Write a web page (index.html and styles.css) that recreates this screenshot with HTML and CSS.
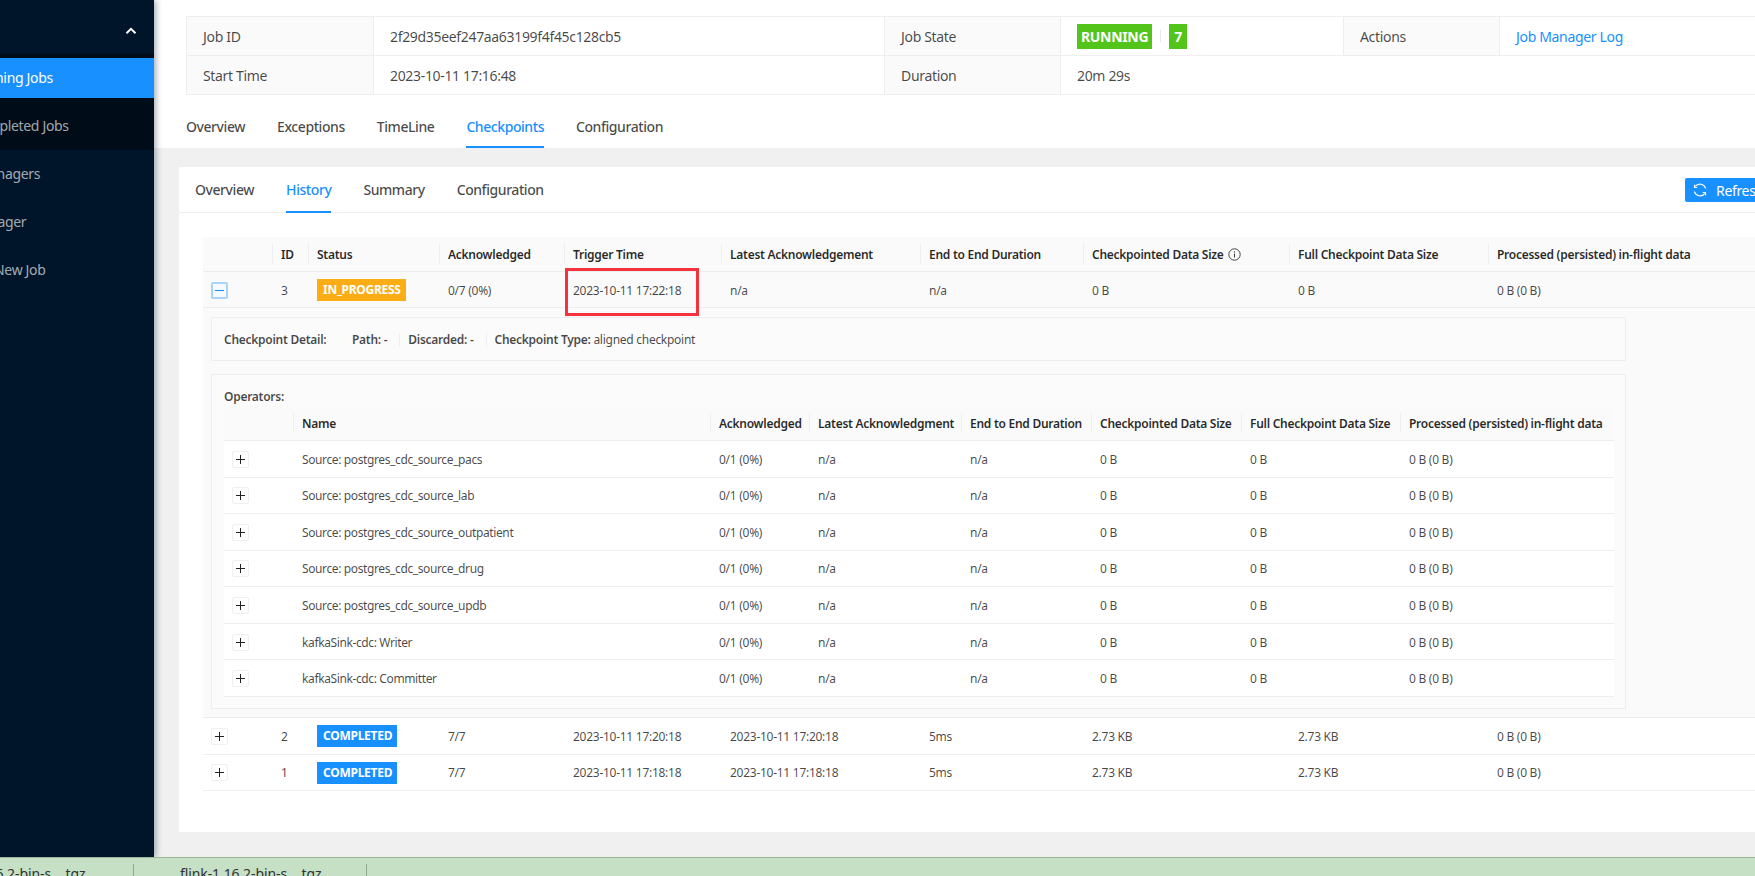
FILE: index.html
```html
<!DOCTYPE html>
<html lang="en">
<head>
<meta charset="utf-8">
<title>Flink Job - Checkpoints</title>
<link rel="stylesheet" href="styles.css">
</head>
<body>
<div class="app">
  <aside class="sidebar">
    <div class="nav-head">
      <svg class="chev" width="12" height="8" viewBox="0 0 12 8"><path d="M1.500 6.200 6 1.800l4.500 4.400" fill="none" stroke="#fff" stroke-width="2"/></svg>
    </div>
    <div class="nav-sub">
      <div class="nav-item active"><span class="label-sub">Running Jobs</span></div>
      <div class="nav-item last"><span class="label-sub">Completed Jobs</span></div>
    </div>
    <div class="nav-top">
      <div class="nav-item"><span class="label-top">Task Managers</span></div>
      <div class="nav-item"><span class="label-top">Job Manager</span></div>
      <div class="nav-item"><span class="label-top">Submit New Job</span></div>
    </div>
  </aside>
  <main class="main">
    <header class="job-head">
      <table class="desc">
        <colgroup><col class="d1"><col class="d2"><col class="d3"><col class="d4"><col class="d5"><col class="d6"></colgroup>
        <tr>
          <th>Job ID</th><td>2f29d35eef247aa63199f4f45c128cb5</td>
          <th>Job State</th>
          <td class="state"><span class="badge green">RUNNING</span><span class="vsep"></span><span class="badge green count">7</span></td>
          <th>Actions</th><td><span class="link">Job Manager Log</span></td>
        </tr>
        <tr>
          <th>Start Time</th><td>2023-10-11 17:16:48</td>
          <th>Duration</th><td colspan="3">20m 29s</td>
        </tr>
      </table>
      <nav class="tabs">
        <span class="tab">Overview</span>
        <span class="tab">Exceptions</span>
        <span class="tab">TimeLine</span>
        <span class="tab on">Checkpoints</span>
        <span class="tab">Configuration</span>
      </nav>
    </header>
    <section class="content">
      <div class="card">
        <div class="subnav">
          <div class="subtabs">
            <span class="tab">Overview</span>
            <span class="tab on">History</span>
            <span class="tab">Summary</span>
            <span class="tab">Configuration</span>
          </div>
          <button class="refresh" type="button">
            <svg width="14" height="14" viewBox="0 0 14 14"><path d="M12.600 5.300A5.900 5.900 0 0 0 2.300 3.400M1.400 8.700A5.900 5.900 0 0 0 11.700 10.600" fill="none" stroke="#fff" stroke-width="1.100"/><path d="M1.500 1.800v2.700h2.700M12.500 12.200V9.500H9.800" fill="none" stroke="#fff" stroke-width="1.100"/></svg>
            <span>Refresh</span>
          </button>
        </div>
        <table class="grid main-grid">
          <colgroup><col class="m1"><col class="m2"><col class="m3"><col class="m4"><col class="m5"><col class="m6"><col class="m7"><col class="m8"><col class="m9"><col class="m10"></colgroup>
          <thead>
            <tr>
              <th></th><th class="sep">ID</th><th class="sep">Status</th><th class="sep">Acknowledged</th><th class="sep">Trigger Time</th><th class="sep">Latest Acknowledgement</th><th class="sep">End to End Duration</th>
              <th class="sep">Checkpointed Data Size<svg class="info" width="13" height="13" viewBox="0 0 13 13"><circle cx="6.500" cy="6.500" r="5.700" fill="none" stroke="#444" stroke-width="1"/><path d="M6.500 5.500v4M6.500 3.300v1.200" stroke="#444" stroke-width="1.100"/></svg></th>
              <th class="sep">Full Checkpoint Data Size</th><th class="sep">Processed (persisted) in-flight data</th>
            </tr>
          </thead>
          <tbody>
            <tr class="shade head-row">
              <td><span class="exp open"><svg width="11" height="11" viewBox="0 0 11 11"><path d="M1 5.500h9" stroke="#1890ff" stroke-width="1.100"/></svg></span></td>
              <td class="num">3</td><td><span class="badge small orange">IN_PROGRESS</span></td><td>0/7 (0%)</td>
              <td class="mark-cell"><span class="mark"></span>2023-10-11 17:22:18</td>
              <td>n/a</td><td>n/a</td><td>0 B</td><td>0 B</td><td>0 B (0 B)</td>
            </tr>
            <tr class="shade">
              <td colspan="10" class="detail">
                <div class="box info-box">
                  <strong class="title">Checkpoint Detail:</strong>
                  <strong class="pair">Path: -</strong>
                  <strong class="pair bar">Discarded: -</strong>
                  <span class="pair bar"><strong>Checkpoint Type:</strong> aligned checkpoint</span>
                </div>
                <div class="box ops-box">
                  <strong class="ops-title">Operators:</strong>
                  <table class="grid op-grid">
                    <colgroup><col class="o1"><col class="o2"><col class="o3"><col class="o4"><col class="o5"><col class="o6"><col class="o7"><col class="o8"></colgroup>
                    <thead>
                      <tr><th></th><th class="sep">Name</th><th class="sep">Acknowledged</th><th class="sep">Latest Acknowledgment</th><th class="sep">End to End Duration</th><th class="sep">Checkpointed Data Size</th><th class="sep">Full Checkpoint Data Size</th><th class="sep">Processed (persisted) in-flight data</th></tr>
                    </thead>
                    <tbody>
                      <tr><td><span class="exp"><svg width="11" height="11" viewBox="0 0 11 11"><path d="M1 5.500h9M5.500 1v9" stroke="#222" stroke-width="1"/></svg></span></td><td class="name">Source: postgres_cdc_source_pacs</td><td>0/1 (0%)</td><td>n/a</td><td>n/a</td><td>0 B</td><td>0 B</td><td>0 B (0 B)</td></tr>
                      <tr><td><span class="exp"><svg width="11" height="11" viewBox="0 0 11 11"><path d="M1 5.500h9M5.500 1v9" stroke="#222" stroke-width="1"/></svg></span></td><td class="name">Source: postgres_cdc_source_lab</td><td>0/1 (0%)</td><td>n/a</td><td>n/a</td><td>0 B</td><td>0 B</td><td>0 B (0 B)</td></tr>
                      <tr><td><span class="exp"><svg width="11" height="11" viewBox="0 0 11 11"><path d="M1 5.500h9M5.500 1v9" stroke="#222" stroke-width="1"/></svg></span></td><td class="name">Source: postgres_cdc_source_outpatient</td><td>0/1 (0%)</td><td>n/a</td><td>n/a</td><td>0 B</td><td>0 B</td><td>0 B (0 B)</td></tr>
                      <tr><td><span class="exp"><svg width="11" height="11" viewBox="0 0 11 11"><path d="M1 5.500h9M5.500 1v9" stroke="#222" stroke-width="1"/></svg></span></td><td class="name">Source: postgres_cdc_source_drug</td><td>0/1 (0%)</td><td>n/a</td><td>n/a</td><td>0 B</td><td>0 B</td><td>0 B (0 B)</td></tr>
                      <tr><td><span class="exp"><svg width="11" height="11" viewBox="0 0 11 11"><path d="M1 5.500h9M5.500 1v9" stroke="#222" stroke-width="1"/></svg></span></td><td class="name">Source: postgres_cdc_source_updb</td><td>0/1 (0%)</td><td>n/a</td><td>n/a</td><td>0 B</td><td>0 B</td><td>0 B (0 B)</td></tr>
                      <tr><td><span class="exp"><svg width="11" height="11" viewBox="0 0 11 11"><path d="M1 5.500h9M5.500 1v9" stroke="#222" stroke-width="1"/></svg></span></td><td class="name">kafkaSink-cdc: Writer</td><td>0/1 (0%)</td><td>n/a</td><td>n/a</td><td>0 B</td><td>0 B</td><td>0 B (0 B)</td></tr>
                      <tr><td><span class="exp"><svg width="11" height="11" viewBox="0 0 11 11"><path d="M1 5.500h9M5.500 1v9" stroke="#222" stroke-width="1"/></svg></span></td><td class="name">kafkaSink-cdc: Committer</td><td>0/1 (0%)</td><td>n/a</td><td>n/a</td><td>0 B</td><td>0 B</td><td>0 B (0 B)</td></tr>
                    </tbody>
                  </table>
                </div>
              </td>
            </tr>
            <tr>
              <td><span class="exp"><svg width="11" height="11" viewBox="0 0 11 11"><path d="M1 5.500h9M5.500 1v9" stroke="#222" stroke-width="1"/></svg></span></td>
              <td class="num">2</td><td><span class="badge small blue">COMPLETED</span></td><td>7/7</td><td>2023-10-11 17:20:18</td><td>2023-10-11 17:20:18</td><td>5ms</td><td>2.73 KB</td><td>2.73 KB</td><td>0 B (0 B)</td>
            </tr>
            <tr>
              <td><span class="exp"><svg width="11" height="11" viewBox="0 0 11 11"><path d="M1 5.500h9M5.500 1v9" stroke="#222" stroke-width="1"/></svg></span></td>
              <td class="num">1</td><td><span class="badge small blue">COMPLETED</span></td><td>7/7</td><td>2023-10-11 17:18:18</td><td>2023-10-11 17:18:18</td><td>5ms</td><td>2.73 KB</td><td>2.73 KB</td><td>0 B (0 B)</td>
            </tr>
          </tbody>
        </table>
      </div>
    </section>
  </main>
</div>
<footer class="downloads">
  <div class="dl first"><span>flink-1.16.2-bin-s....tgz</span></div>
  <div class="dl second"><span>flink-1.16.2-bin-s....tgz</span></div>
</footer>
</body>
</html>
```

FILE: styles.css
```css
* { box-sizing: border-box; }
html, body { margin: 0; height: 100%; overflow: hidden; }
body {
  font-family: "Noto Sans", "Open Sans", sans-serif;
  font-size: 14px;
  letter-spacing: -.33px;
  color: rgba(0, 0, 0, .72);
  background: #fff;
  display: flex;
  flex-direction: column;
  width: 1755px;
  height: 876px;
}
table { border-spacing: 0; border-collapse: separate; table-layout: fixed; }

.app { display: flex; height: 857px; overflow: hidden; }

/* sidebar */
.sidebar {
  width: 154px;
  flex: none;
  background: #001529;
  color: rgba(255, 255, 255, .65);
  box-shadow: 2px 0 6px rgba(0, 21, 41, .35);
  position: relative;
  z-index: 2;
  overflow: hidden;
}
.nav-head { height: 54px; display: flex; justify-content: flex-end; padding: 27px 17px 0 0; }
.chev { display: block; }
.nav-sub { background: #000c17; padding-top: 4px; height: 96px; }
.nav-top { padding-top: 4px; }
.nav-item { height: 40px; line-height: 40px; margin-bottom: 8px; white-space: nowrap; overflow: hidden; }
.nav-item.last { margin-bottom: 0; }
.nav-item.active { background: #1890ff; color: #fff; }
.label-sub { margin-left: -30px; }
.label-top { margin-left: -54px; }

/* main */
.main { flex: 1; min-width: 0; background: #f0f0f0; overflow: hidden; display: flex; flex-direction: column; }
.job-head { background: #fff; padding: 16px 0 0 32px; height: 149px; border-bottom: 1px solid #eee; flex: none; }
.desc { width: 1569px; border: 1px solid #eee; border-width: 1px 0 0 1px; }
.desc th, .desc td { height: 39px; padding: 0 16px; border-right: 1px solid #eee; border-bottom: 1px solid #eee; font-weight: 400; text-align: left; white-space: nowrap; overflow: hidden; }
.desc th { background: #fafafa; }
.d1 { width: 187px; } .d2 { width: 511px; } .d3 { width: 176px; } .d4 { width: 283px; } .d5 { width: 156px; } .d6 { width: 256px; }
.badge { display: inline-block; color: #fff; font-weight: 700; white-space: nowrap; vertical-align: middle; }
.desc .badge { height: 25px; line-height: 25px; padding: 0 4px; }
.desc .badge.count { width: 18px; padding: 0; text-align: center; }
.green { background: #52c41a; }
.orange { background: #faad14; }
.blue { background: #1890ff; }
.vsep { display: inline-block; width: 1px; height: 12px; background: #e8e8e8; margin: 0 8px; vertical-align: middle; }
.link { color: #1890ff; }

.tabs { display: flex; gap: 32px; margin-top: 15px; height: 38px; }
.tab { display: block; height: 100%; line-height: 33px; white-space: nowrap; font-weight: 500; letter-spacing: -.43px; }
.tab.on { color: #1890ff; border-bottom: 2px solid #1890ff; }

.content { flex: 1; padding: 18px 0 0 25px; }
.card { background: #fff; height: 665px; width: 1600px; }
.subnav { height: 46px; border-bottom: 1px solid #eee; display: flex; justify-content: space-between; }
.subtabs { display: flex; gap: 32px; padding-left: 16px; height: 46px; padding-top: 9px; }
.subtabs .tab { line-height: 28px; height: 37px; }
.refresh {
  display: flex; align-items: center; gap: 9px;
  width: 100px; height: 24px; margin: 11px 0 0 0; padding: 0 8px;
  background: #1890ff; color: #fff; border: 0; border-radius: 2px;
  font: inherit; letter-spacing: inherit; position: relative; left: 6px;
}

/* grids */
.grid { font-size: 12px; letter-spacing: -.27px; }
.grid th { background: #fafafa; font-weight: 600; text-align: left; padding: 0 8px 0 9px; white-space: nowrap; position: relative; color: rgba(0,0,0,.85); border-bottom: 1px solid #eee; }
.grid td { padding: 1px 8px 0 9px; white-space: nowrap; border-bottom: 1px solid #eee; }
.grid td:first-child { padding-left: 8px; }
.grid td.name { letter-spacing: -.38px; }
.sep::before { content: ""; position: absolute; left: 0; top: 50%; width: 1px; height: 19px; margin-top: -10px; background: #eee; }
.main-grid { width: 1552px; margin: 24px 0 0 24px; }
.main-grid > thead > tr > th { height: 35px; }
.main-grid > tbody > tr > td { height: 36.500px; }
.main-grid > tbody > .head-row > td { height: 36px; }
.main-grid > tbody > .shade > td { background: #fafafa; }
.m1 { width: 69px; } .m2 { width: 36px; } .m3 { width: 131px; } .m4 { width: 125px; } .m5 { width: 157px; } .m6 { width: 199px; } .m7 { width: 163px; } .m8 { width: 206px; } .m9 { width: 199px; } .m10 { width: 267px; }
.info { vertical-align: -2px; margin-left: 4px; }
.badge.small { height: 22px; line-height: 22px; padding: 0 5px 0 6px; }
.exp { display: block; width: 17px; height: 17px; border: 1px solid #f0f0f0; border-radius: 2px; background: #fff; padding: 2px; }
.exp svg { display: block; }
.exp.open { border: 2px solid #a6d4fb; background: #f7fbff; padding: 1px; }
.mark-cell { position: relative; }
.mark { position: absolute; left: 1px; top: -4px; width: 134px; height: 48px; border: 3px solid #f5333f; }

td.detail { padding: 9px 0 8px 8px !important; }
.box { width: 1415px; background: #fbfbfb; border: 1px solid #eee; }
.info-box { height: 44px; display: flex; align-items: center; padding: 1px 0 0 12px; margin-bottom: 13px; }
.title { width: 128px; font-weight: 600; }
.pair { padding-right: 12px; font-weight: 400; }
strong.pair, .pair strong { font-weight: 600; }
.bar { border-left: 1px solid #eee; padding-left: 8px; line-height: 14px; }
.ops-box { height: 335px; padding: 13px 0 0 12px; }
.ops-title { display: block; height: 18px; line-height: 18px; font-weight: 600; }
.op-grid { width: 1390px; }
.op-grid th { height: 35px; }
.op-grid td { height: 36.570px; background: #fff; }
.o1 { width: 69px; } .o2 { width: 417px; } .o3 { width: 99px; } .o4 { width: 152px; } .o5 { width: 130px; } .o6 { width: 150px; } .o7 { width: 159px; } .o8 { width: 214px; }

/* download bar */
.downloads { height: 19px; background: #c5e0c5; border-top: 1px solid #9ab89a; display: flex; overflow: hidden; padding-top: 6px; position: relative; z-index: 3; letter-spacing: -.1px; }
.dl { height: 30px; border-right: 1px solid #8fa88f; white-space: nowrap; overflow: hidden; color: #333; line-height: 20px; }
.dl.first { width: 134px; }
.dl.first span { margin-left: -56px; }
.dl.second { width: 233px; padding-left: 46px; }
```
